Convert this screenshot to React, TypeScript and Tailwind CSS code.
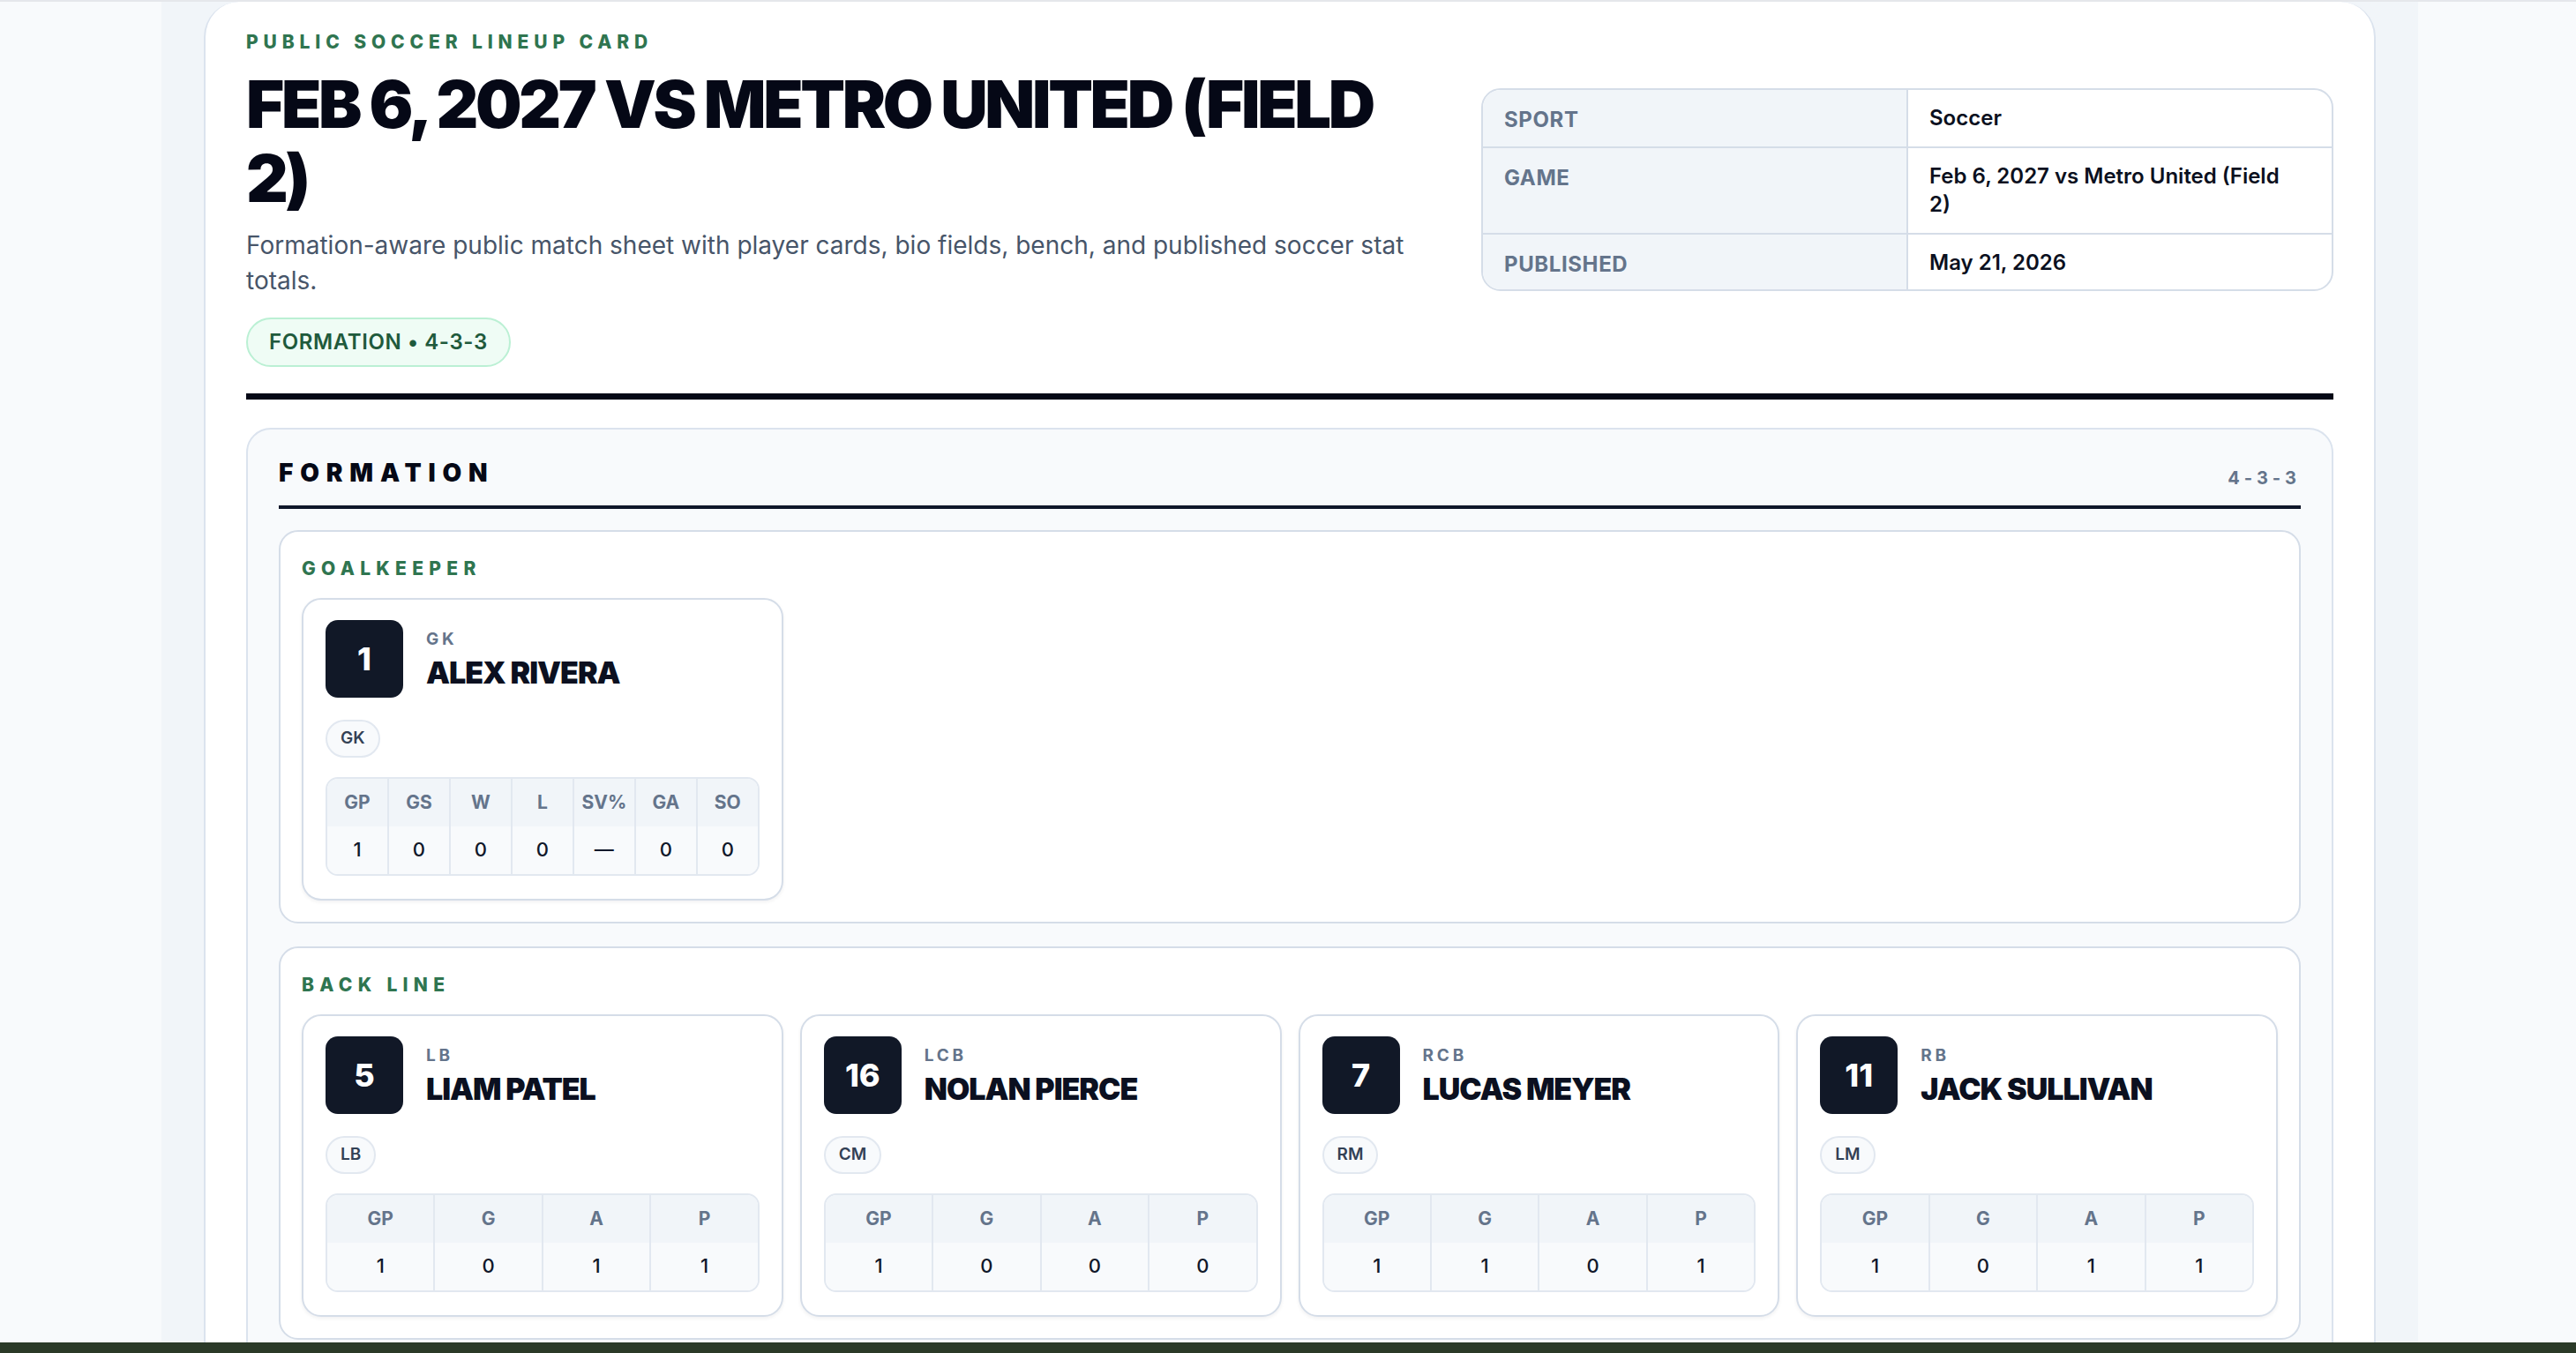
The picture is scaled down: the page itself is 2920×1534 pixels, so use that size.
import React from "react";

type P = { no: string; pos: string; name: string; chip: string; stats: [string, string][] };

const gk: P = { no: "1", pos: "GK", name: "ALEX RIVERA", chip: "GK", stats: [["GP","1"],["GS","0"],["W","0"],["L","0"],["SV%","—"],["GA","0"],["SO","0"]] };
const back: P[] = [
  { no: "5", pos: "LB", name: "LIAM PATEL", chip: "LB", stats: [["GP","1"],["G","0"],["A","1"],["P","1"]] },
  { no: "16", pos: "LCB", name: "NOLAN PIERCE", chip: "CM", stats: [["GP","1"],["G","0"],["A","0"],["P","0"]] },
  { no: "7", pos: "RCB", name: "LUCAS MEYER", chip: "RM", stats: [["GP","1"],["G","1"],["A","0"],["P","1"]] },
  { no: "11", pos: "RB", name: "JACK SULLIVAN", chip: "LM", stats: [["GP","1"],["G","0"],["A","1"],["P","1"]] },
];

function Card({ p }: { p: P }) {
  return (
    <div className="rounded-[22px] border-2 border-[#d5dde8] bg-white px-[25px] pt-[23px] pb-[26px] shadow-[0_2px_4px_rgba(15,23,42,0.06)]">
      <div className="flex items-center gap-[26px]">
        <div className="flex h-[88px] w-[88px] items-center justify-center rounded-[14px] bg-[#111827] text-[36px] font-extrabold text-white">{p.no}</div>
        <div className="flex flex-col">
          <div className="text-[19px] font-bold tracking-[0.2em] text-[#64748b]">{p.pos}</div>
          <div className="mt-[4px] text-[34px] font-black tracking-[-0.03em] text-[#0b1020] leading-[40px]">{p.name}</div>
        </div>
      </div>
      <div className="mt-[25px] flex">
        <span className="rounded-full border-2 border-[#e2e8f0] bg-[#f8fafc] px-[15px] py-[5px] text-[19px] font-semibold text-[#334155]">{p.chip}</span>
      </div>
      <div className="mt-[22px] flex overflow-hidden rounded-[14px] border-2 border-[#e2e8f0]">
        {p.stats.map(([k, v], i) => (
          <div key={k} className={`flex flex-1 flex-col ${i > 0 ? "border-l-2 border-[#e2e8f0]" : ""}`}>
            <div className="flex h-[54px] items-center justify-center bg-[#f1f5f9] text-[21px] font-bold text-[#64748b]">{k}</div>
            <div className="flex h-[54px] items-center justify-center bg-[#f8fafc] text-[22px] font-medium text-[#0f172a]">{v}</div>
          </div>
        ))}
      </div>
    </div>
  );
}

function Group({ label, children }: { label: string; children?: React.ReactNode }) {
  return (
    <div className="rounded-[22px] border-2 border-[#d5dde8] bg-white px-[24px] pt-[26px] pb-[24px]">
      <div className="text-[21px] font-extrabold tracking-[0.3em] text-[#2f7550]">{label}</div>
      <div className="mt-[18px]">{children}</div>
    </div>
  );
}

export default function App() {
  return (
    <div className="flex h-[1534px] flex-col overflow-hidden bg-[#f8fafc]" style={{ fontFamily: "Inter, 'Noto Sans', sans-serif" }}>
      <div className="h-[2px] bg-[#e5e7eb]" />
      <div className="flex flex-1 overflow-hidden">
        <div className="w-[183px] shrink-0 bg-[#f8fafc]" />
        <div className="flex w-[2558px] shrink-0 bg-[#f1f5f9] px-[48px]">
          <div className="flex-1 rounded-t-[40px] border-x-2 border-[#dbe3ee] bg-white px-[46px] pt-[30px]">
            <div className="flex items-start justify-between">
              <div className="w-[1340px]">
                <div className="text-[21px] font-extrabold tracking-[0.28em] text-[#2f7550]">PUBLIC SOCCER LINEUP CARD</div>
                <h1 className="mt-[12px] text-[74px] font-black leading-[84px] tracking-[-0.045em] text-[#050816]">FEB 6, 2027 VS METRO UNITED (FIELD 2)</h1>
                <p className="mt-[14px] w-[1320px] text-[28px] leading-[40px] text-[#475569]">Formation-aware public match sheet with player cards, bio fields, bench, and published soccer stat totals.</p>
                <div className="mt-[22px] flex">
                  <span className="rounded-full border-2 border-[#bbf0d4] bg-[#effcf5] px-[24px] py-[8px] text-[24px] font-semibold tracking-wide text-[#1f5a3c]">FORMATION • 4-3-3</span>
                </div>
              </div>
              <div className="mt-[68px] w-[966px] overflow-hidden rounded-[22px] border-2 border-[#d5dde8] text-[24px]">
                {[["SPORT","Soccer",64],["GAME","Feb 6, 2027 vs Metro United (Field 2)",98],["PUBLISHED","May 21, 2026",64]].map(([k,v,h],i) => (
                  <div key={k as string} className={`flex ${i > 0 ? "border-t-2 border-[#d5dde8]" : ""}`} style={{ minHeight: h as number }}>
                    <div className="w-[480px] shrink-0 bg-[#f1f5f9] px-[24px] pt-[16px] font-bold tracking-wide text-[#64748b]">{k}</div>
                    <div className="flex-1 border-l-2 border-[#d5dde8] pl-[24px] pr-[40px] pt-[16px] pb-[12px] font-semibold leading-[32px] text-[#0b1020]">{v}</div>
                  </div>
                ))}
              </div>
            </div>
            <div className="mt-[30px] h-[7px] bg-[#050816]" />
            <div className="mt-[32px] rounded-t-[28px] border-2 border-[#dbe3ee] bg-[#f8fafc] px-[35px] pt-[28px]">
              <div className="flex items-end justify-between border-b-4 border-[#0f172a] pb-[16px]">
                <div className="text-[28px] font-black tracking-[0.28em] text-[#050816]">FORMATION</div>
                <div className="text-[20px] font-bold tracking-[0.25em] text-[#64748b]">4-3-3</div>
              </div>
              <div className="mt-[24px] flex flex-col gap-[26px]">
                <Group label="GOALKEEPER">
                  <div className="grid grid-cols-4 gap-[19px]"><Card p={gk} /></div>
                </Group>
                <Group label="BACK LINE">
                  <div className="grid grid-cols-4 gap-[19px]">{back.map((p) => <Card key={p.no} p={p} />)}</div>
                </Group>
                <Group label="MIDFIELD" />
              </div>
            </div>
          </div>
        </div>
        <div className="flex-1 bg-[#f8fafc]" />
      </div>
      <div className="h-[12px] bg-[#2b3a28]" />
    </div>
  );
}
